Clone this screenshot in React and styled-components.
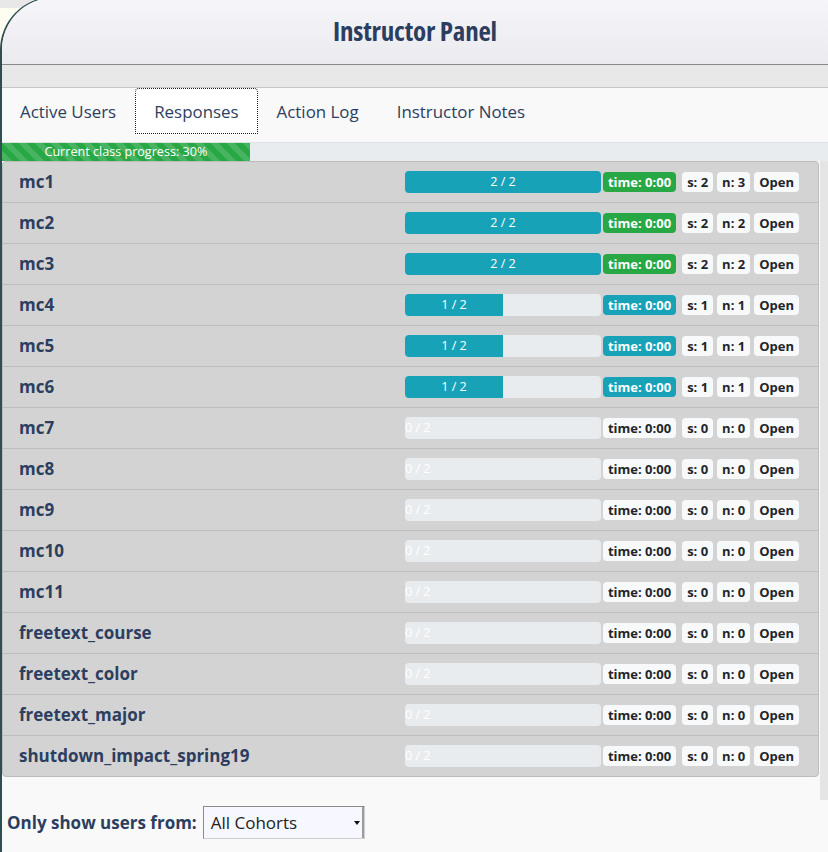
import React from 'react'
import styled, { createGlobalStyle, css } from 'styled-components'

const GlobalStyle = createGlobalStyle`
  html, body {
    margin: 0;
    padding: 0;
  }
  body {
    background: linear-gradient(#e8e8e8 0 8px, #fdfdf2 8px);
    font-family: "Open Sans", "Liberation Sans", sans-serif;
    overflow: hidden;
  }
`

// palette
const navy = '#2c3e5f'
const info = '#17a2b8'
const success = '#28a745'

const Shell = styled.div`
  margin-top: -3px;
  min-height: 855px;
  border-left: 2px solid #2f4f4f;
  border-top: 1px solid #2f4f4f;
  border-top-left-radius: 53px 53px;
  background: #f9f9f9;
  overflow: hidden;
`

const Header = styled.header`
  height: 66px;
  display: flex;
  align-items: center;
  justify-content: center;
  background: linear-gradient(#f6f5fa, #ebeaee);
  border-bottom: 1px solid #8a8a8a;
`

const Title = styled.h1`
  margin: 0;
  margin-top: -2px;
  font-size: 27px;
  font-weight: 700;
  font-stretch: 75%;
  letter-spacing: -0.2px;
  color: ${navy};
`

const Band = styled.div`
  height: 22px;
  background: #e8e8e8;
  border-bottom: 1px solid #c6c6c6;
`

const Tabs = styled.nav`
  display: flex;
  align-items: flex-start;
  height: 54px;
  margin-left: -1px;
  background: #f9f9f9;
  border-bottom: 1px solid #dfe2e5;
`

const Tab = styled.div`
  height: 46px;
  box-sizing: border-box;
  padding: 0 18px;
  display: flex;
  align-items: center;
  font-size: 16.9px;
  color: ${navy};
  border: 1px solid transparent;
  border-radius: 4px 4px 0 0;
  ${(p) => p.$active && css`
    background: #fff;
    border: 1px dotted #222;
  `}
`

const ClassProgress = styled.div`
  height: 18px;
  background: #e9ecef;
`

const ClassFill = styled.div`
  height: 100%;
  width: ${(p) => p.$pct}%;
  background-color: ${success};
  background-image: linear-gradient(
    45deg,
    rgba(255, 255, 255, 0.15) 25%,
    transparent 25%,
    transparent 50%,
    rgba(255, 255, 255, 0.15) 50%,
    rgba(255, 255, 255, 0.15) 75%,
    transparent 75%,
    transparent
  );
  background-size: 16px 16px;
  color: #fff;
  font-size: 12.6px;
  line-height: 18px;
  text-align: center;
  white-space: nowrap;
`

const Content = styled.div`
  display: grid;
  grid-template-columns: 1fr 8px;
`

const ListCell = styled.div`
  padding: 0 1px 23px 0;
`

const Gutter = styled.div`
  background: #e5e5e5;
`

const Panel = styled.div`
  background: #d3d3d3;
  border: 1px solid #bcbcbc;
  border-radius: 4px;
`

const Row = styled.div`
  height: 40px;
  display: flex;
  align-items: center;
  justify-content: space-between;
  padding: 0 19px 0 16px;
  & + & {
    border-top: 1px solid #bdbdbd;
  }
`

const Label = styled.span`
  font-size: 17px;
  font-weight: 700;
  color: ${navy};
  margin-top: -2px;
`

const Stats = styled.div`
  display: flex;
  align-items: center;
`

const Bar = styled.div`
  width: 196px;
  height: 22px;
  margin-right: 2px;
  border-radius: 4px;
  background: #e9ecef;
  overflow: hidden;
  display: flex;
`

const BarFill = styled.div`
  width: ${(p) => p.$pct}%;
  flex: none;
  height: 100%;
  background: ${info};
  color: #fff;
  font-size: 12.6px;
  line-height: 22px;
  text-align: center;
  white-space: nowrap;
`

const badgeTones = {
  success: css`background: ${success}; color: #fff;`,
  info: css`background: ${info}; color: #fff;`,
  light: css`background: #f8f9fa; color: #212529;`,
}

const Badge = styled.span`
  height: 20px;
  box-sizing: border-box;
  padding: 0 5px;
  margin-left: ${(p) => p.$gap ?? 4}px;
  border-radius: 4px;
  font-size: 13px;
  font-weight: 700;
  line-height: 20px;
  white-space: nowrap;
  ${(p) => badgeTones[p.$tone || 'light']}
`

const Filter = styled.div`
  display: flex;
  align-items: center;
  gap: 6px;
  padding: 6px 0 0 5px;
`

const FilterLabel = styled.span`
  font-size: 17px;
  font-weight: 700;
  color: ${navy};
`

const Select = styled.div`
  width: 162px;
  height: 33px;
  box-sizing: border-box;
  display: flex;
  align-items: center;
  justify-content: space-between;
  padding-left: 7px;
  background: #f7f8ff;
  border: 1px solid;
  border-color: #8c8c8c #d0d0d0 #d0d0d0 #8c8c8c;
  font-size: 17px;
  color: #222;
`

const Caret = styled.span`
  display: flex;
  align-items: center;
  height: 100%;
  padding: 0 2px 0 3px;
  border-right: 2px solid #9c9c9c;
  &::before {
    content: '';
    border-left: 3px solid transparent;
    border-right: 3px solid transparent;
    border-top: 4px solid #111;
  }
`

const questions = [
  { name: 'mc1', done: 2, time: 'success', s: 2, n: 3 },
  { name: 'mc2', done: 2, time: 'success', s: 2, n: 2 },
  { name: 'mc3', done: 2, time: 'success', s: 2, n: 2 },
  { name: 'mc4', done: 1, time: 'info', s: 1, n: 1 },
  { name: 'mc5', done: 1, time: 'info', s: 1, n: 1 },
  { name: 'mc6', done: 1, time: 'info', s: 1, n: 1 },
  { name: 'mc7', done: 0, time: 'light', s: 0, n: 0 },
  { name: 'mc8', done: 0, time: 'light', s: 0, n: 0 },
  { name: 'mc9', done: 0, time: 'light', s: 0, n: 0 },
  { name: 'mc10', done: 0, time: 'light', s: 0, n: 0 },
  { name: 'mc11', done: 0, time: 'light', s: 0, n: 0 },
  { name: 'freetext_course', done: 0, time: 'light', s: 0, n: 0 },
  { name: 'freetext_color', done: 0, time: 'light', s: 0, n: 0 },
  { name: 'freetext_major', done: 0, time: 'light', s: 0, n: 0 },
  { name: 'shutdown_impact_spring19', done: 0, time: 'light', s: 0, n: 0 },
]

const total = 2

const App = () => {
  return (
    <>
      <GlobalStyle />
      <Shell>
        <Header>
          <Title>Instructor Panel</Title>
        </Header>
        <Band />
        <Tabs>
          <Tab>Active Users</Tab>
          <Tab $active>Responses</Tab>
          <Tab>Action Log</Tab>
          <Tab>Instructor Notes</Tab>
        </Tabs>

        <ClassProgress>
          <ClassFill $pct={30}>Current class progress: 30%</ClassFill>
        </ClassProgress>

        <Content>
          <ListCell>
            <Panel>
              {questions.map((q) => (
                <Row key={q.name}>
                  <Label>{q.name}</Label>
                  <Stats>
                    <Bar>
                      <BarFill $pct={(q.done / total) * 100}>
                        {q.done} / {total}
                      </BarFill>
                    </Bar>
                    <Badge $tone={q.time} $gap={0}>time: 0:00</Badge>
                    <Badge $gap={6}>s: {q.s}</Badge>
                    <Badge>n: {q.n}</Badge>
                    <Badge>Open</Badge>
                  </Stats>
                </Row>
              ))}
            </Panel>
          </ListCell>
          <Gutter />
        </Content>

        <Filter>
          <FilterLabel>Only show users from:</FilterLabel>
          <Select>
            All Cohorts
            <Caret />
          </Select>
        </Filter>
      </Shell>
    </>
  )
}

export default App
